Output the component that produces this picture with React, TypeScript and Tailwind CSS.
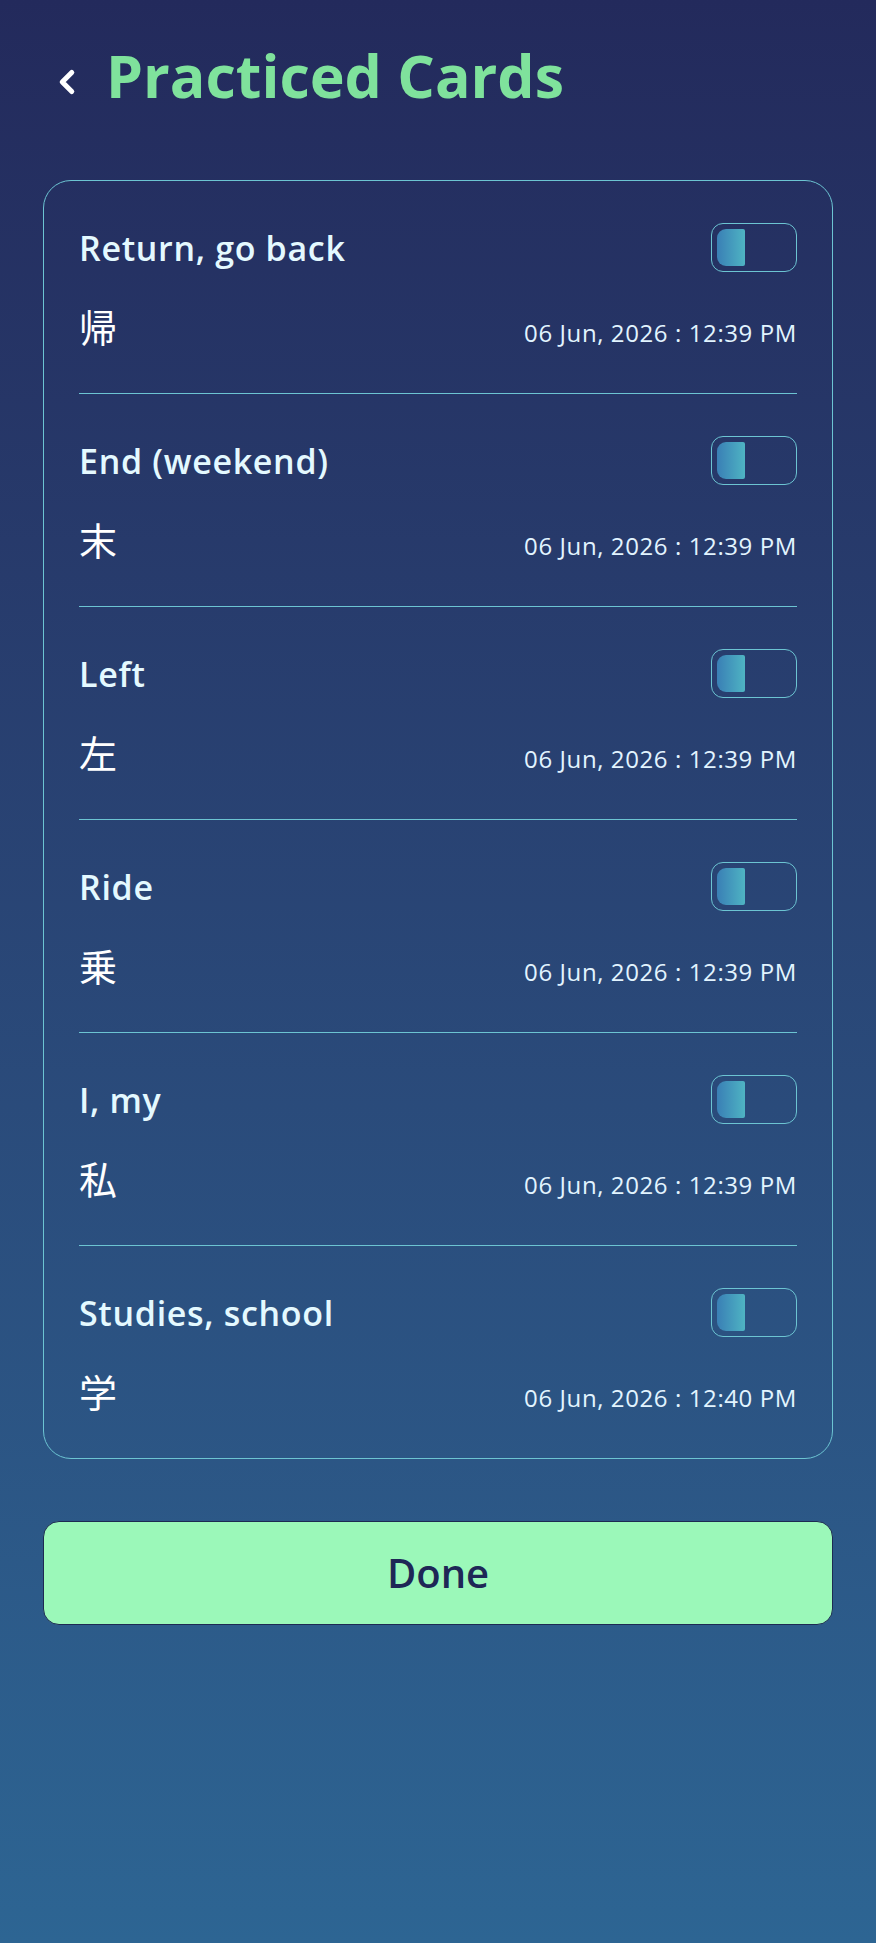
import React from 'react';
import { ChevronLeft } from 'lucide-react';

type Practiced = { meaning: string; kanji: string; when: string };

const cards: Practiced[] = [
  { meaning: 'Return, go back', kanji: '帰', when: '06 Jun, 2026 : 12:39 PM' },
  { meaning: 'End (weekend)', kanji: '末', when: '06 Jun, 2026 : 12:39 PM' },
  { meaning: 'Left', kanji: '左', when: '06 Jun, 2026 : 12:39 PM' },
  { meaning: 'Ride', kanji: '乗', when: '06 Jun, 2026 : 12:39 PM' },
  { meaning: 'I, my', kanji: '私', when: '06 Jun, 2026 : 12:39 PM' },
  { meaning: 'Studies, school', kanji: '学', when: '06 Jun, 2026 : 12:40 PM' },
];

const Toggle: React.FC = () => (
  <div className="w-[86px] h-[49px] rounded-[12px] border-[1.5px] border-[#6cc4d2] p-[5px] flex">
    <div className="w-[28px] h-full rounded-l-[9px] rounded-r-[2px] bg-gradient-to-r from-[#3a7fb5] to-[#4fb4c3]" />
  </div>
);

const CardRow: React.FC<{ item: Practiced }> = ({ item }) => (
  <div className="pt-[42px] pb-[40.5px]">
    <div className="flex items-center justify-between">
      <span className="text-[34px] font-semibold tracking-[0.02em] text-[#e4f9ff] leading-none">{item.meaning}</span>
      <Toggle />
    </div>
    <div className="mt-[28px] flex items-end justify-between h-[52px]">
      <span className="text-[38px] leading-[52px] text-white font-['Noto_Sans_CJK_JP',sans-serif]">{item.kanji}</span>
      <span className="text-[24px] tracking-[0.025em] text-[#e2f4ff] leading-none mb-[7px]">{item.when}</span>
    </div>
  </div>
);

export default function App() {
  return (
    <div className="min-h-[1943px] w-full bg-gradient-to-b from-[#232a5c] to-[#2d6593] font-['Open_Sans','Noto_Sans_CJK_JP',sans-serif]">
      {/* Header */}
      <div className="flex items-start gap-[20px] pl-[48px] pt-[46px] h-[140px]">
        <ChevronLeft className="w-[38px] h-[38px] text-white mt-[17px]" strokeWidth={3.2} />
        <h1 className="text-[59px] font-bold text-[#7fe29c] leading-none">Practiced Cards</h1>
      </div>

      {/* Card list */}
      <div className="mx-[43px] mt-[40px] border-[1.5px] border-[#6cc4d2] rounded-[28px] px-[35px]">
        {cards.map((c, i) => (
          <div key={c.kanji}>
            {i > 0 && <div className="h-[1.5px] bg-[#6cc4d2]" />}
            <CardRow item={c} />
          </div>
        ))}
      </div>

      <div className="mx-[43px] mt-[62px]">
        <button className="w-full h-[104px] rounded-[16px] bg-[#9bf8b9] border-[1.5px] border-[#1d2a52] text-[40px] font-semibold text-[#1e2756]">
          Done
        </button>
      </div>
    </div>
  );
}
